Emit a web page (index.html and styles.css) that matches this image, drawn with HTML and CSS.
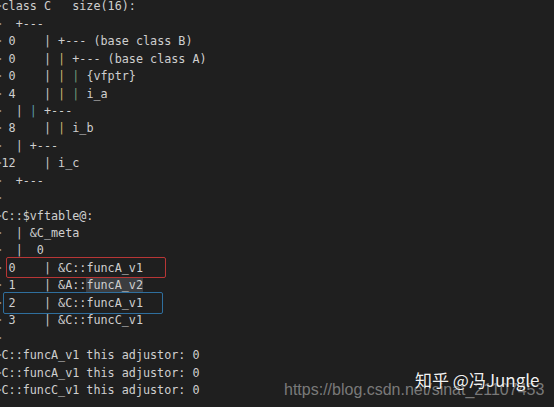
FILE: index.html
```html
<!DOCTYPE html>
<html>
<head>
<meta charset="utf-8">
<link rel="stylesheet" href="styles.css">
</head>
<body>
<div class="screen">
  <div class="code">
    <div class="line"><span class="f">&gt;</span>class C   size(16):</div>
    <div class="line"><span class="f">&gt;</span>  +---</div>
    <div class="line"><span class="f">&gt;</span> 0    <span class="b1">|</span> +--- (base class B)</div>
    <div class="line"><span class="f">&gt;</span> 0    <span class="b1">|</span> <span class="b2">|</span> +--- (base class A)</div>
    <div class="line"><span class="f">&gt;</span> 0    <span class="b1">|</span> <span class="b2">|</span> <span class="b3">|</span> {vfptr}</div>
    <div class="line"><span class="f">&gt;</span> 4    <span class="b1">|</span> <span class="b2">|</span> <span class="b3">|</span> i_a</div>
    <div class="line"><span class="f">&gt;</span>  <span class="b1">|</span> <span class="b4">|</span> +---</div>
    <div class="line"><span class="f">&gt;</span> 8    <span class="b1">|</span> <span class="b2">|</span> i_b</div>
    <div class="line"><span class="f">&gt;</span>  <span class="b1">|</span> +---</div>
    <div class="line"><span class="f">&gt;</span>12    <span class="b1">|</span> i_c</div>
    <div class="line"><span class="f">&gt;</span>  +---</div>
    <div class="line"><span class="f">&gt;</span></div>
    <div class="line"><span class="f">&gt;</span>C::$vftable@:</div>
    <div class="line"><span class="f">&gt;</span>  <span class="b1">|</span> &amp;C_meta</div>
    <div class="line"><span class="f">&gt;</span>  <span class="b1">|</span>  0</div>
    <div class="line"><span class="f">&gt;</span> 0    <span class="b1">|</span> &amp;C::funcA_v1<span class="box red"></span></div>
    <div class="line"><span class="f">&gt;</span> 1    <span class="b1">|</span> &amp;A::<span class="hl">funcA_v2</span></div>
    <div class="line"><span class="f">&gt;</span> 2    <span class="b1">|</span> &amp;C::funcA_v1<span class="box blue"></span></div>
    <div class="line"><span class="f">&gt;</span> 3    <span class="b1">|</span> &amp;C::funcC_v1</div>
    <div class="line"><span class="f">&gt;</span></div>
    <div class="line"><span class="f">&gt;</span>C::funcA_v1 this adjustor: 0</div>
    <div class="line"><span class="f">&gt;</span>C::funcA_v1 this adjustor: 0</div>
    <div class="line"><span class="f">&gt;</span>C::funcC_v1 this adjustor: 0</div>
  </div>
  <div class="mark-csdn">https://blog.csdn.net/sinat_21107453</div>
  <div class="mark-zhihu">知乎 @冯Jungle</div>
</div>
</body>
</html>
```

FILE: styles.css
```css
html, body {
  margin: 0;
  padding: 0;
  background: #1f1f1f;
  overflow: hidden;
}

.screen {
  position: relative;
  width: 554px;
  height: 407px;
  overflow: hidden;
  background: #1f1f1f;
}

.code {
  margin-left: -5.6px;
  margin-top: -1.7px;
  font-family: "DejaVu Sans Mono", "Liberation Mono", monospace;
  font-size: 11.76px;
  line-height: 17.45px;
  color: #cfcfcf;
}

.line {
  position: relative;
  height: 17.45px;
  white-space: pre;
}

.f { color: #9a9a9a; }

.b1 { color: #c8c8c8; }
.b2 { color: #c9b46e; }
.b3 { color: #6f9c7c; }
.b4 { color: #5a9aa3; }

.hl {
  background: #3b3d40;
}

.box {
  position: absolute;
  border-radius: 2px;
  box-sizing: border-box;
}

.box.red {
  left: 11.6px;
  width: 160px;
  top: -3px;
  height: 21.5px;
  border: 1.5px solid #b83636;
}

.box.blue {
  left: 8.9px;
  width: 160px;
  top: -3px;
  height: 22.5px;
  border: 1.5px solid #2f6f9e;
}

.mark-zhihu {
  position: absolute;
  left: 415px;
  top: 369px;
  font-family: "Noto Sans CJK SC", "Noto Sans", sans-serif;
  font-size: 17px;
  line-height: 22px;
  color: #f2f2f2;
  text-shadow: 0 0 1px rgba(0,0,0,0.7);
}

.mark-csdn {
  position: absolute;
  left: 284px;
  top: 380px;
  font-family: "Liberation Sans", Arial, sans-serif;
  font-size: 16px;
  line-height: 20px;
  color: rgba(200, 200, 200, 0.55);
}
```
